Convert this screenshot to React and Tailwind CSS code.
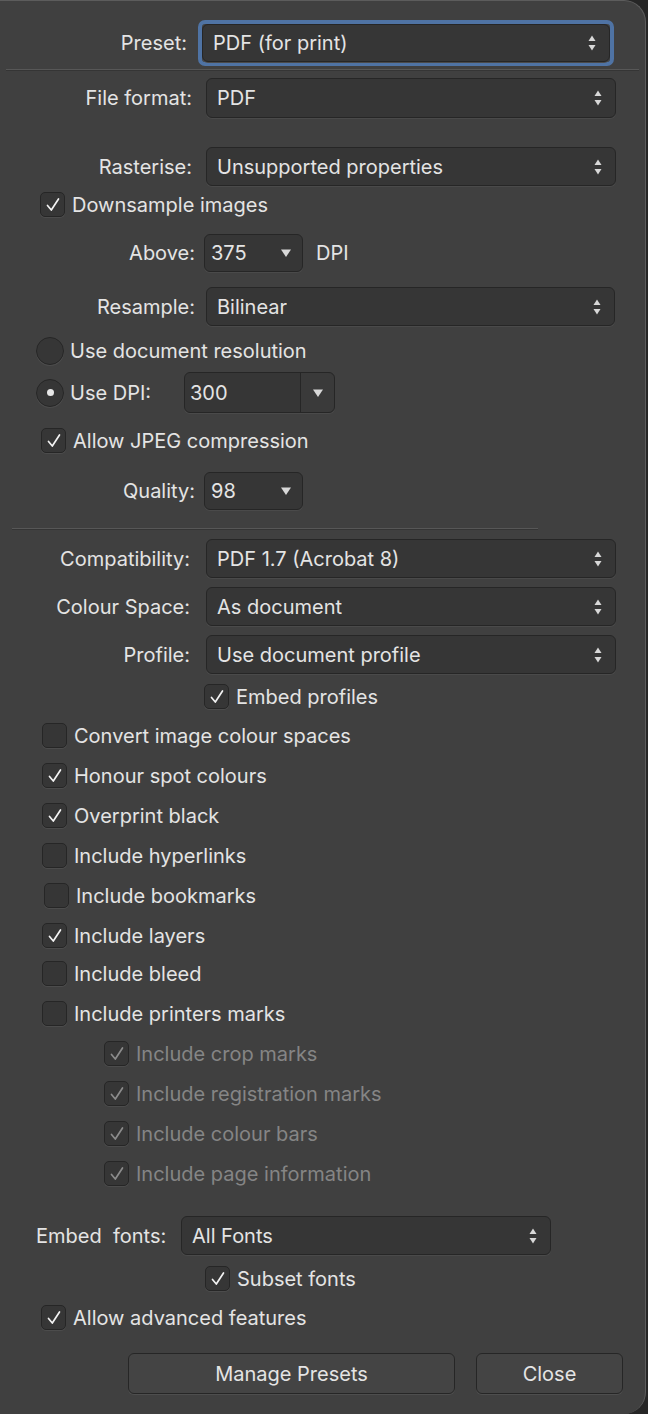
import React from 'react';

const FONT = { fontFamily: 'Inter, "Noto Sans", "Liberation Sans", sans-serif' };

function UpDown() {
  return (
    <svg width="10" height="20" viewBox="0 0 10 20" className="shrink-0">
      <path d="M1.5 8 L5 2.5 L8.5 8 Z" fill="#d8d8d8" />
      <path d="M1.5 12 L5 17.5 L8.5 12 Z" fill="#d8d8d8" />
    </svg>
  );
}

function Down() {
  return (
    <svg width="12" height="10" viewBox="0 0 12 10" className="shrink-0">
      <path d="M1 1.5 L11 1.5 L6 9 Z" fill="#d8d8d8" />
    </svg>
  );
}

function Select({ value, className, single, focused }) {
  const box = (
    <div
      className={`flex items-center justify-between rounded-[6px] border border-[#262626] bg-[#363636] pl-[10px] pr-[12px] shadow-[0_1px_0_#4a4a4a] ${focused ? '' : className}`}
      style={focused ? { height: 38, width: 408 } : undefined}
    >
      <span className="truncate text-[#e4e4e4]">{value}</span>
      {single ? <Down /> : <UpDown />}
    </div>
  );
  if (focused) {
    return <div className={`rounded-[7px] border-[4px] border-[#4f73a4] ${className}`}>{box}</div>;
  }
  return box;
}

function Check({ checked = true, disabled }) {
  return (
    <div className="flex h-[25px] w-[25px] shrink-0 items-center justify-center rounded-[5px] border border-[#262626] bg-[#363636] shadow-[0_1px_0_#4c4c4c]">
      {checked && (
        <svg width="16" height="16" viewBox="0 0 16 16">
          <path
            d="M2.5 8.5 L6.3 13 L13.5 2"
            fill="none"
            stroke={disabled ? '#8c8c8c' : '#f2f2f2'}
            strokeWidth="1.7"
            strokeLinecap="round"
            strokeLinejoin="round"
          />
        </svg>
      )}
    </div>
  );
}

function CheckRow({ label, x, mt, checked = true, disabled }) {
  return (
    <div className="flex h-[25px] items-center" style={{ marginLeft: x, marginTop: mt }}>
      <Check checked={checked} disabled={disabled} />
      <span className={`ml-[7px] ${disabled ? 'text-[#858585]' : 'text-[#e4e4e4]'}`}>{label}</span>
    </div>
  );
}

function Radio({ on }) {
  return (
    <div className="flex h-[28px] w-[28px] shrink-0 items-center justify-center rounded-full border border-[#262626] bg-[#363636] shadow-[0_1px_0_#4c4c4c]">
      {on && <div className="h-[7px] w-[7px] rounded-full bg-[#e8e8e8]" />}
    </div>
  );
}

export default function App() {
  return (
    <div className="min-h-[1414px] w-[648px] bg-[#262626] text-[20px]" style={FONT}>
      <div className="h-[1414px] w-[646px] overflow-hidden rounded-tr-[22px] rounded-br-[22px] border-t border-r border-[#5c5c5c] bg-[#404040]">
        {/* Preset */}
        <div className="mt-[19px] flex items-center">
          <div className="w-[187px] shrink-0 text-right text-[#e4e4e4]">Preset:</div>
          <Select value="PDF (for print)" focused className="ml-[11px]" />
        </div>
        <div className="mx-[6px] mt-[3px] h-[1px] bg-[#575757] shadow-[0_1px_0_#353535]" />

        <div className="mt-[8px] flex items-center">
          <div className="w-[192px] shrink-0 text-right text-[#e4e4e4]">File format:</div>
          <Select value="PDF" className="ml-[14px] h-[40px] w-[410px]" />
        </div>
        <div className="mt-[29px] flex items-center">
          <div className="w-[192px] shrink-0 text-right text-[#e4e4e4]">Rasterise:</div>
          <Select value="Unsupported properties" className="ml-[14px] h-[39px] w-[410px]" />
        </div>

        <CheckRow label="Downsample images" x={40} mt={6} />

        <div className="mt-[17px] flex items-center">
          <div className="w-[195px] shrink-0 text-right text-[#e4e4e4]">Above:</div>
          <Select value="375" single className="ml-[9px] h-[38px] w-[99px] !pl-[6px] !pr-[10px]" />
          <span className="ml-[13px] text-[#e4e4e4]">DPI</span>
        </div>
        <div className="mt-[15px] flex items-center">
          <div className="w-[195px] shrink-0 text-right text-[#e4e4e4]">Resample:</div>
          <Select value="Bilinear" className="ml-[11px] h-[39px] w-[409px]" />
        </div>

        <div className="ml-[36px] mt-[11px] flex h-[28px] items-center">
          <Radio />
          <span className="ml-[6px] text-[#e4e4e4]">Use document resolution</span>
        </div>
        <div className="ml-[36px] mt-[7px] flex h-[41px] items-center">
          <Radio on />
          <span className="ml-[6px] w-[114px] text-[#e4e4e4]">Use DPI:</span>
          <div className="flex h-[41px] w-[151px] rounded-[6px] border border-[#262626] bg-[#363636] shadow-[0_1px_0_#4a4a4a]">
            <div className="flex flex-1 items-center pl-[5px] text-[#e4e4e4]">300</div>
            <div className="flex w-[34px] items-center justify-center rounded-r-[6px] border-l border-[#262626] bg-[#3a3a3a]">
              <Down />
            </div>
          </div>
        </div>

        <CheckRow label="Allow JPEG compression" x={41} mt={15} />

        <div className="mt-[19px] flex items-center">
          <div className="w-[195px] shrink-0 text-right text-[#e4e4e4]">Quality:</div>
          <Select value="98" single className="ml-[9px] h-[38px] w-[99px] !pl-[6px] !pr-[10px]" />
        </div>

        <div className="ml-[12px] mt-[18px] h-[1px] w-[526px] bg-[#575757] shadow-[0_1px_0_#353535]" />

        <div className="mt-[10px] flex items-center">
          <div className="w-[190px] shrink-0 text-right text-[#e4e4e4]">Compatibility:</div>
          <Select value="PDF 1.7 (Acrobat 8)" className="ml-[16px] h-[39px] w-[410px]" />
        </div>
        <div className="mt-[9px] flex items-center">
          <div className="w-[190px] shrink-0 text-right text-[#e4e4e4]">Colour Space:</div>
          <Select value="As document" className="ml-[16px] h-[39px] w-[410px]" />
        </div>
        <div className="mt-[9px] flex items-center">
          <div className="w-[190px] shrink-0 text-right text-[#e4e4e4]">Profile:</div>
          <Select value="Use document profile" className="ml-[16px] h-[39px] w-[410px]" />
        </div>

        <CheckRow label="Embed profiles" x={204} mt={10} />

        <CheckRow label="Convert image colour spaces" x={42} mt={14} checked={false} />
        <CheckRow label="Honour spot colours" x={42} mt={15} />
        <CheckRow label="Overprint black" x={42} mt={15} />
        <CheckRow label="Include hyperlinks" x={42} mt={15} checked={false} />
        <CheckRow label="Include bookmarks" x={44} mt={15} checked={false} />
        <CheckRow label="Include layers" x={42} mt={15} />
        <CheckRow label="Include bleed" x={42} mt={13} checked={false} />
        <CheckRow label="Include printers marks" x={42} mt={15} checked={false} />
        <CheckRow label="Include crop marks" x={104} mt={15} disabled />
        <CheckRow label="Include registration marks" x={104} mt={15} disabled />
        <CheckRow label="Include colour bars" x={104} mt={15} disabled />
        <CheckRow label="Include page information" x={104} mt={15} disabled />

        <div className="mt-[30px] flex items-center">
          <div className="ml-[36px] w-[135px] shrink-0 whitespace-pre text-[#e4e4e4]">Embed  fonts:</div>
          <Select value="All Fonts" className="ml-[10px] h-[39px] w-[370px]" />
        </div>

        <CheckRow label="Subset fonts" x={205} mt={11} />
        <CheckRow label="Allow advanced features" x={41} mt={14} />

        <div className="mt-[23px] flex">
          <button className="ml-[128px] h-[41px] w-[327px] rounded-[6px] border border-[#262626] bg-[#444444] text-[#e4e4e4] shadow-[0_1px_0_#4e4e4e]">
            Manage Presets
          </button>
          <button className="ml-[21px] h-[41px] w-[147px] rounded-[6px] border border-[#262626] bg-[#444444] text-[#e4e4e4] shadow-[0_1px_0_#4e4e4e]">
            Close
          </button>
        </div>
      </div>
    </div>
  );
}
